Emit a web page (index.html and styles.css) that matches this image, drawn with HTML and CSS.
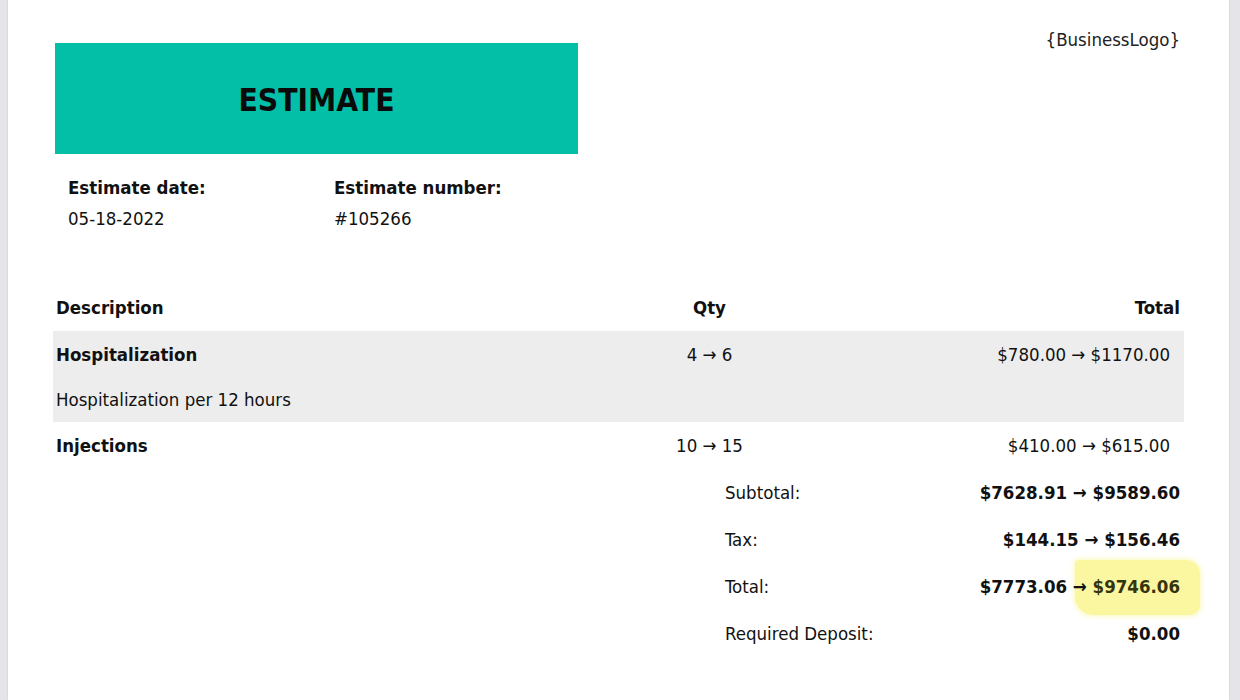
FILE: index.html
```html
<!DOCTYPE html>
<html lang="en">
<head>
<meta charset="utf-8">
<title>Estimate</title>
<link rel="stylesheet" href="styles.css">
</head>
<body>
<div class="page">
  <header class="top">
    <div class="top-left">
      <div class="banner"><h1 class="banner-title">ESTIMATE</h1></div>
      <div class="meta">
        <div class="meta-col meta-date">
          <div class="meta-label">Estimate date:</div>
          <div class="meta-value">05-18-2022</div>
        </div>
        <div class="meta-col">
          <div class="meta-label">Estimate number:</div>
          <div class="meta-value">#105266</div>
        </div>
      </div>
    </div>
    <div class="logo">{BusinessLogo}</div>
  </header>

  <section class="items">
    <div class="row head">
      <div class="c-desc">Description</div>
      <div class="c-qty">Qty</div>
      <div class="c-total">Total</div>
    </div>
    <div class="item shaded">
      <div class="row">
        <div class="c-desc strong">Hospitalization</div>
        <div class="c-qty">4 → 6</div>
        <div class="c-total">$780.00 → $1170.00</div>
      </div>
      <div class="row sub">
        <div class="c-desc">Hospitalization per 12 hours</div>
        <div class="c-qty"></div>
        <div class="c-total"></div>
      </div>
    </div>
    <div class="item">
      <div class="row">
        <div class="c-desc strong">Injections</div>
        <div class="c-qty">10 → 15</div>
        <div class="c-total">$410.00 → $615.00</div>
      </div>
    </div>
  </section>

  <section class="summary">
    <div class="sum-row"><span class="sum-label">Subtotal:</span><span class="sum-value">$7628.91 → $9589.60</span></div>
    <div class="sum-row"><span class="sum-label">Tax:</span><span class="sum-value">$144.15 → $156.46</span></div>
    <div class="sum-row"><span class="sum-label">Total:</span><span class="sum-value">$7773.06 → <mark class="hl">$9746.06</mark></span></div>
    <div class="sum-row"><span class="sum-label">Required Deposit:</span><span class="sum-value">$0.00</span></div>
  </section>
</div>
</body>
</html>
```

FILE: styles.css
```css
* { box-sizing: border-box; }

html, body {
  margin: 0;
  padding: 0;
}

body {
  background: #e4e4e9;
  padding: 0 11px 0 8px;
  font-family: "DejaVu Sans Condensed", "DejaVu Sans", sans-serif;
  font-size: 18.5px;
  line-height: 22px;
  color: #111;
  overflow: hidden;
}

.page {
  background: #fff;
  min-height: 700px;
  padding: 0 45px 0 45px;
  box-shadow: 0 0 2px rgba(0,0,0,0.12);
}

.top {
  display: flex;
  justify-content: space-between;
  align-items: flex-start;
}

.top-left {
  padding-top: 43px;
  padding-left: 2px;
}

.banner {
  width: 523px;
  height: 111px;
  background: #03bfa8;
  display: flex;
  align-items: center;
  justify-content: center;
}

.banner-title {
  margin: 0;
  font-size: 31.5px;
  line-height: 36px;
  font-weight: bold;
  color: #0a0a0a;
  padding-top: 2px;
}

.meta {
  display: flex;
  padding-left: 13px;
  margin-top: 23px;
}

.meta-date { width: 266px; }

.meta-label {
  font-weight: bold;
}

.meta-value {
  margin-top: 9px;
}

.logo {
  margin-top: 29px;
  margin-right: 4px;
  color: #222;
}

.items {
  margin-top: 54px;
}

.row {
  display: grid;
  grid-template-columns: 384px 545px 1fr;
  align-items: center;
  height: 47px;
}

.row.sub { height: 44px; }

.shaded { background: #ededed; }

.c-desc { padding-left: 3px; }
.c-qty { text-align: center; }
.c-total { text-align: right; padding-right: 14px; }

.head { font-weight: bold; }
.head .c-total { padding-right: 4px; }

.strong { font-weight: bold; }

.summary {
  margin-left: 672px;
}

.sum-row {
  display: flex;
  justify-content: space-between;
  align-items: center;
  height: 47px;
  padding-right: 4px;
}

.sum-value {
  font-weight: bold;
  position: relative;
  z-index: 0;
}

.hl {
  position: relative;
  color: #34340f;
  background: transparent;
}

.hl::before {
  content: "";
  position: absolute;
  top: -16px;
  bottom: -18px;
  left: -18px;
  right: -20px;
  z-index: -1;
  background: rgba(250, 246, 150, 0.9);
  border-radius: 4px 14px 10px 18px;
  box-shadow: 0 0 5px 1px rgba(250, 246, 150, 0.7);
}
```
